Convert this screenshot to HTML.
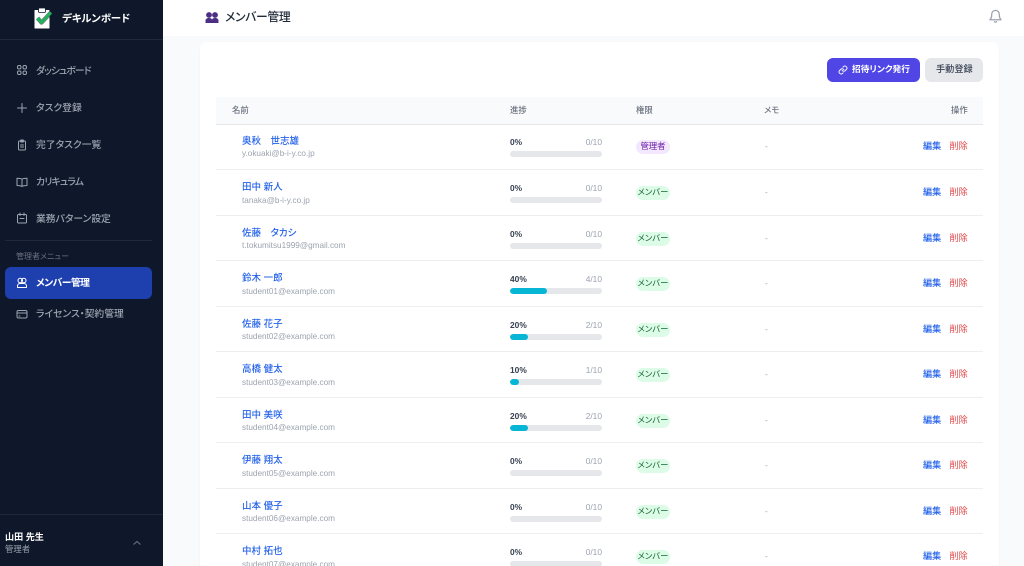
<!DOCTYPE html>
<html lang="ja"><head><meta charset="utf-8"><title>メンバー管理</title>
<style>
*{box-sizing:border-box;margin:0;padding:0}
html,body{width:1024px;height:566px;overflow:hidden;background:#f9fafb}
body{position:relative;font-family:"Liberation Sans","Noto Sans CJK JP",sans-serif;font-feature-settings:"palt"}
#w{position:absolute;left:0;top:0;width:1024px;height:566px;overflow:hidden;filter:blur(.35px)}
.a{position:absolute;white-space:nowrap}
#side{position:absolute;left:0;top:0;width:163px;height:566px;background:#0f172a}
.nav{position:absolute;left:36px;font-size:9.8px;line-height:14px;color:#9ca3af;font-weight:500;white-space:nowrap}
.ic{position:absolute;left:16px;width:12px;height:12px;fill:none;stroke:#9ca3af;stroke-width:2;stroke-linecap:round;stroke-linejoin:round}
.row{position:absolute;left:216px;width:767px;height:46px;border-top:1px solid #eceef1}
.row>*{position:absolute;white-space:nowrap}
.n{left:26px;top:11px;font-size:9.5px;line-height:14px;color:#2563eb;font-weight:500}
.e{left:26px;top:24.400px;font-size:8.2px;line-height:12px;color:#9ca3af}
.p{left:294px;top:12px;font-size:8.4px;line-height:12px;color:#374151;font-weight:700}
.c{left:294px;width:92px;text-align:right;top:12px;font-size:8.4px;line-height:12px;color:#9ca3af}
.t{left:294px;top:26.5px;width:92px;height:6.5px;border-radius:4px;background:#e5e7eb;overflow:hidden}
.t i{display:block;height:100%;background:#06b6d4;border-radius:4px}
.b{left:420px;top:16px;width:34px;height:13.5px;border-radius:7px;font-size:8.4px;line-height:13.5px;text-align:center;font-weight:400;background:#dcfce7;color:#166534}
.b.ad{background:#f3e8ff;color:#6b21a8}
.m{left:549px;top:16px;font-size:8.4px;line-height:13px;color:#9ca3af}
.ed{left:707px;top:16px;font-size:9.1px;line-height:13px;color:#2563eb;font-weight:500}
.de{left:733.5px;top:16px;font-size:9.1px;line-height:13px;color:#e0484a;font-weight:400}
.h{position:absolute;top:104px;font-size:8.4px;line-height:12px;color:#6b7280;font-weight:500;white-space:nowrap}
</style></head><body><div id="w">

<div id="side">
<div class="a" style="left:0;top:39px;width:163px;height:1px;background:#1e293b"></div>
<svg class="a" style="left:33px;top:7px" width="20" height="22" viewBox="0 0 20 22"><path d="M2 3.500h14v17.500H2z" fill="#fff" stroke="#fff" stroke-linejoin="round"/><rect x="5.500" y="1" width="7" height="4.500" rx="1" fill="#fff" stroke="#0f172a" stroke-width=".8"/><path d="M4.500 11l4 4.500L18 5.500" fill="none" stroke="#0f172a" stroke-width="4.400" stroke-linejoin="round" opacity=".55"/><path d="M4.500 11l4 4.500L18 5.500" fill="none" stroke="#1fb45a" stroke-width="3" stroke-linejoin="round"/></svg>
<div class="a" style="left:62px;top:12px;font-size:10.4px;line-height:16px;font-weight:700;color:#fff">デキルンボード</div>

<svg class="ic" style="top:64px" viewBox="0 0 24 24" stroke-width="2"><rect x="3" y="3" width="7" height="7" rx="3"/><rect x="14" y="3" width="7" height="7" rx="3"/><rect x="3" y="14" width="7" height="7" rx="3"/><rect x="14" y="14" width="7" height="7" rx="3"/></svg>
<div class="nav" style="top:65px;letter-spacing:-.9px">ダッシュボード</div>
<svg class="ic" style="top:102px" viewBox="0 0 24 24"><path d="M12 3v18M3 12h18"/></svg>
<div class="nav" style="top:102px">タスク登録</div>
<svg class="ic" style="top:139px" viewBox="0 0 24 24"><rect x="5" y="4" width="14" height="18" rx="2"/><rect x="9" y="2" width="6" height="4" rx="1"/><path d="M9 12h6M9 16h6"/></svg>
<div class="nav" style="top:139px">完了タスク一覧</div>
<svg class="ic" style="top:176px" viewBox="0 0 24 24"><path d="M12 6.5C10 5 7 4.500 2 4.500V19c5 0 8 .5 10 2 2-1.500 5-2 10-2V4.500c-5 0-8 .5-10 2zM12 6.500V21"/></svg>
<div class="nav" style="top:176px;letter-spacing:-.8px">カリキュラム</div>
<svg class="ic" style="top:212px" viewBox="0 0 24 24"><rect x="3" y="5" width="18" height="17" rx="2"/><path d="M8 2v5M16 2v5M8 13h8"/></svg>
<div class="nav" style="top:213px">業務パターン設定</div>

<div class="a" style="left:5px;top:240px;width:147px;height:1px;background:#1e293b"></div>
<div class="a" style="left:16px;top:251px;font-size:8px;line-height:12px;color:#6b7280">管理者メニュー</div>
<div class="a" style="left:5px;top:267px;width:147px;height:32px;border-radius:6px;background:#1e40af"></div>
<svg class="ic" style="top:277px;stroke:#fff" viewBox="0 0 24 24"><circle cx="8.500" cy="7" r="4.500"/><circle cx="15.500" cy="7" r="4.500"/><path d="M3 21v-3a5 5 0 0 1 5-5h8a5 5 0 0 1 5 5v3zM3 21h18"/></svg>
<div class="nav" style="top:277px;color:#fff;font-weight:700;letter-spacing:-.5px">メンバー管理</div>
<svg class="ic" style="top:308px" viewBox="0 0 24 24"><rect x="2" y="5" width="20" height="15" rx="3"/><path d="M2 10h20M6 16h2"/></svg>
<div class="nav" style="top:308px">ライセンス・契約管理</div>

<div class="a" style="left:0;top:514px;width:163px;height:1px;background:#1e293b"></div>
<div class="a" style="left:5px;top:530px;font-size:9.1px;line-height:14px;color:#fff;font-weight:700">山田 先生</div>
<div class="a" style="left:5px;top:543px;font-size:8.4px;line-height:12px;color:#9ca3af">管理者</div>
<svg class="a" style="left:132px;top:539px" width="10" height="8" viewBox="0 0 10 8"><path d="M1.500 5.500L5 2.500l3.500 3" fill="none" stroke="#6b7280" stroke-width="1.100"/></svg>
</div>

<div class="a" style="left:163px;top:0;width:861px;height:36px;background:#fff"></div>
<svg class="a" style="left:205px;top:11px" width="14" height="13" viewBox="0 0 14 13"><circle cx="4" cy="4" r="2.900" fill="#4c2f85"/><circle cx="10" cy="4" r="2.900" fill="#4c2f85"/><path d="M.5 12V9.500C.5 8 2 7 4 7s3 .7 3 2c0-1.300 1-2 3-2s3.500 1 3.500 2.500V12z" fill="#4c2f85"/></svg>
<div class="a" style="left:225px;top:8px;font-size:11.800px;letter-spacing:-.3px;line-height:18px;font-weight:500;color:#1f2937">メンバー管理</div>
<svg class="a" style="left:988px;top:8px" width="15" height="16" viewBox="0 0 24 24" fill="none" stroke="#9ca3af" stroke-width="2" stroke-linecap="round" stroke-linejoin="round"><path d="M18 9a6 6 0 0 0-12 0c0 7-3 9-3 9h18s-3-2-3-9"/><path d="M13.700 21a2 2 0 0 1-3.400 0"/></svg>

<div class="a" style="left:200px;top:42px;width:799px;height:540px;background:#fff;border-radius:7px;box-shadow:0 1px 2px rgba(0,0,0,.03)"></div>

<div class="a" style="left:827px;top:58px;width:93px;height:24px;border-radius:6px;background:#4f46e5"></div>
<svg class="a" style="left:838px;top:65px" width="10" height="10" viewBox="0 0 24 24" fill="none" stroke="#fff" stroke-width="2.200" stroke-linecap="round" stroke-linejoin="round"><path d="M10 13a5 5 0 0 0 7.500.5l3-3a5 5 0 0 0-7-7l-1.700 1.700"/><path d="M14 11a5 5 0 0 0-7.500-.5l-3 3a5 5 0 0 0 7 7l1.700-1.700"/></svg>
<div class="a" style="left:852px;top:62px;font-size:8.700px;line-height:14px;color:#fff;font-weight:700">招待リンク発行</div>
<div class="a" style="left:925px;top:58px;width:58px;height:24px;border-radius:6px;background:#e5e7eb"></div>
<div class="a" style="left:936px;top:62px;font-size:9.200px;line-height:14px;color:#374151;font-weight:500">手動登録</div>

<div class="a" style="left:216px;top:97px;width:767px;height:28px;background:#f9fafb;border-bottom:1px solid #e5e7eb"></div>
<div class="h" style="left:232px">名前</div>
<div class="h" style="left:510px">進捗</div>
<div class="h" style="left:636px">権限</div>
<div class="h" style="left:764px">メモ</div>
<div class="h" style="left:951px">操作</div>

<div class="row" style="top:124px;border-top:0"><div class="n">奥秋　世志雄</div><div class="e">y.okuaki@b-i-y.co.jp</div><div class="p">0%</div><div class="c">0/10</div><div class="t"><i style="width:0"></i></div><div class="b ad">管理者</div><div class="m">-</div><div class="ed">編集</div><div class="de">削除</div></div>
<div class="row" style="top:169.400px"><div class="n">田中 新人</div><div class="e">tanaka@b-i-y.co.jp</div><div class="p">0%</div><div class="c">0/10</div><div class="t"><i style="width:0"></i></div><div class="b">メンバー</div><div class="m">-</div><div class="ed">編集</div><div class="de">削除</div></div>
<div class="row" style="top:215px"><div class="n">佐藤　タカシ</div><div class="e">t.tokumitsu1999@gmail.com</div><div class="p">0%</div><div class="c">0/10</div><div class="t"><i style="width:0"></i></div><div class="b">メンバー</div><div class="m">-</div><div class="ed">編集</div><div class="de">削除</div></div>
<div class="row" style="top:260.400px"><div class="n">鈴木 一郎</div><div class="e">student01@example.com</div><div class="p">40%</div><div class="c">4/10</div><div class="t"><i style="width:40%"></i></div><div class="b">メンバー</div><div class="m">-</div><div class="ed">編集</div><div class="de">削除</div></div>
<div class="row" style="top:306px"><div class="n">佐藤 花子</div><div class="e">student02@example.com</div><div class="p">20%</div><div class="c">2/10</div><div class="t"><i style="width:20%"></i></div><div class="b">メンバー</div><div class="m">-</div><div class="ed">編集</div><div class="de">削除</div></div>
<div class="row" style="top:351.400px"><div class="n">高橋 健太</div><div class="e">student03@example.com</div><div class="p">10%</div><div class="c">1/10</div><div class="t"><i style="width:10%"></i></div><div class="b">メンバー</div><div class="m">-</div><div class="ed">編集</div><div class="de">削除</div></div>
<div class="row" style="top:397px"><div class="n">田中 美咲</div><div class="e">student04@example.com</div><div class="p">20%</div><div class="c">2/10</div><div class="t"><i style="width:20%"></i></div><div class="b">メンバー</div><div class="m">-</div><div class="ed">編集</div><div class="de">削除</div></div>
<div class="row" style="top:442.400px"><div class="n">伊藤 翔太</div><div class="e">student05@example.com</div><div class="p">0%</div><div class="c">0/10</div><div class="t"><i style="width:0"></i></div><div class="b">メンバー</div><div class="m">-</div><div class="ed">編集</div><div class="de">削除</div></div>
<div class="row" style="top:488px"><div class="n">山本 優子</div><div class="e">student06@example.com</div><div class="p">0%</div><div class="c">0/10</div><div class="t"><i style="width:0"></i></div><div class="b">メンバー</div><div class="m">-</div><div class="ed">編集</div><div class="de">削除</div></div>
<div class="row" style="top:533.400px"><div class="n">中村 拓也</div><div class="e">student07@example.com</div><div class="p">0%</div><div class="c">0/10</div><div class="t"><i style="width:0"></i></div><div class="b">メンバー</div><div class="m">-</div><div class="ed">編集</div><div class="de">削除</div></div>
</div></body></html>
